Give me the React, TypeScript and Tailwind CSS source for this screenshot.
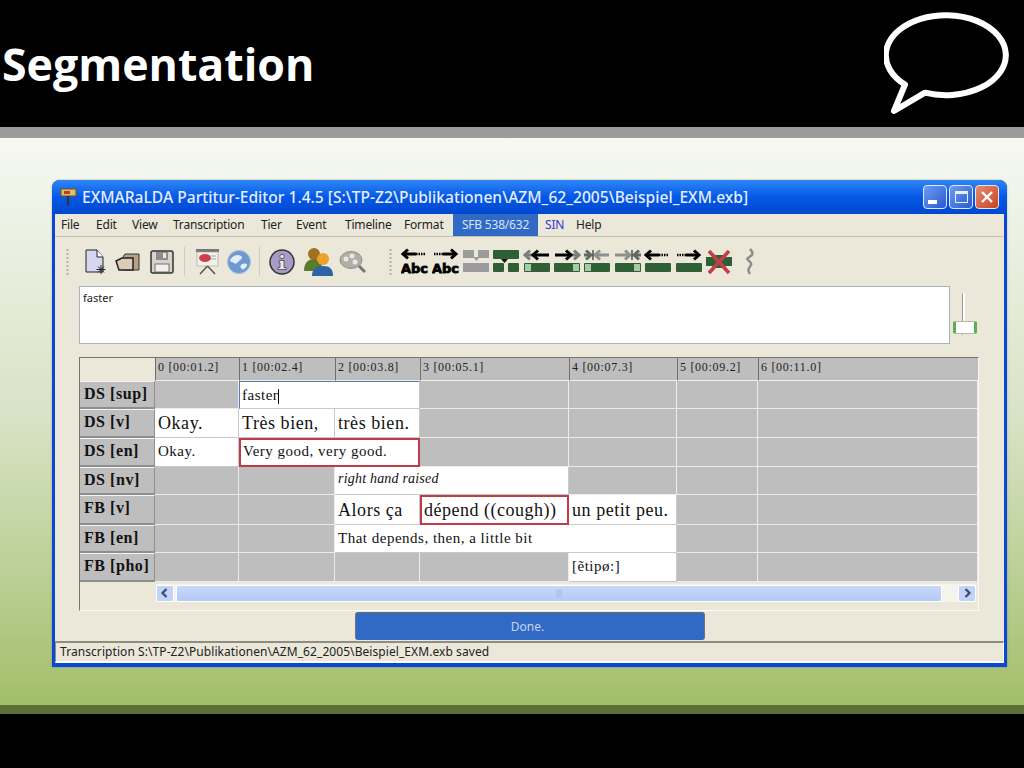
import React from 'react';

const GREEN = '#2f5f35';
const LIGHT = '#a6caa4';
const GRAY = '#9b9b9b';

type Cell = { text?: string; span?: string; red?: boolean; cls?: string; caret?: boolean };

const timeline = ['0 [00:01.2]', '1 [00:02.4]', '2 [00:03.8]', '3 [00:05.1]', '4 [00:07.3]', '5 [00:09.2]', '6 [00:11.0]'];

const big = 'text-[18px] pl-[3px] pt-[4px] tracking-[0.55px]';
const bigLow = 'text-[18px] pl-[3px] pt-[5px] tracking-[0.55px]';
const mid = 'text-[15px] pl-[3px] pt-[3px] tracking-[0.5px]';

const tiers: { label: string; cells: Cell[] }[] = [
  {
    label: 'DS [sup]',
    cells: [{}, { text: 'faster', span: 'col-span-2', cls: 'text-[15px] pl-[2px] pt-[3px] tracking-[0.5px] border-t border-l border-t-[#5a78b0] border-l-[#5a78b0]', caret: true }, {}, {}, {}, {}],
  },
  {
    label: 'DS [v]',
    cells: [
      { text: 'Okay.', cls: big },
      { text: 'Très bien,', cls: big },
      { text: 'très bien.', cls: big },
      {}, {}, {}, {},
    ],
  },
  {
    label: 'DS [en]',
    cells: [
      { text: 'Okay.', cls: mid },
      { text: 'Very good, very good.', span: 'col-span-2', red: true, cls: 'text-[15px] pl-[2px] pt-[1px] tracking-[0.5px]' },
      {}, {}, {}, {},
    ],
  },
  {
    label: 'DS [nv]',
    cells: [
      {}, {},
      { text: 'right hand raised', span: 'col-span-2', cls: 'text-[14px] italic pl-[3px] pt-[2px] tracking-[0.2px]' },
      {}, {}, {},
    ],
  },
  {
    label: 'FB [v]',
    cells: [
      {}, {},
      { text: 'Alors ça', cls: bigLow },
      { text: 'dépend ((cough))', red: true, cls: 'text-[18px] pl-[2px] pt-[3px] tracking-[0.5px]' },
      { text: 'un petit peu.', cls: bigLow },
      {}, {},
    ],
  },
  {
    label: 'FB [en]',
    cells: [
      {}, {},
      { text: 'That depends, then, a little bit', span: 'col-span-3', cls: mid },
      {}, {},
    ],
  },
  {
    label: 'FB [pho]',
    cells: [{}, {}, {}, {}, { text: '[ẽtipø:]', cls: mid }, {}, {}],
  },
];

const menu = [
  { label: 'File', w: 'w-[35px]' },
  { label: 'Edit', w: 'w-[36px]' },
  { label: 'View', w: 'w-[41px]' },
  { label: 'Transcription', w: 'w-[88px]' },
  { label: 'Tier', w: 'w-[35px]' },
  { label: 'Event', w: 'w-[49px]' },
  { label: 'Timeline', w: 'w-[59px]' },
  { label: 'Format', w: 'w-[49px]' },
];

function Gripper({ cls }: { cls: string }) {
  return (
    <svg width="3" height="28" viewBox="0 0 3 28" className={cls}>
      {[1, 5, 9, 13, 17, 21, 25].map(y => (
        <rect key={y} x="0.5" y={y} width="2" height="2" fill="#b5b2a4" />
      ))}
    </svg>
  );
}

function Sep({ cls }: { cls: string }) {
  return <div className={`w-px h-[29px] bg-[#cfccbd] ${cls}`} />;
}

// thick arrow, with the tail broken up into small dashes when dash is set
function Arrow({ x1, x2, y, color = '#000', dash }: { x1: number; x2: number; y: number; color?: string; dash?: boolean }) {
  const dir = x2 > x1 ? 1 : -1;
  const solidEnd = dash ? x2 - dir * 14 : x1;
  return (
    <g stroke={color} fill="none">
      <path d={`M${solidEnd} ${y}H${x2 - dir * 2}`} strokeWidth="3" />
      {dash && <path d={`M${x1} ${y}H${solidEnd}`} strokeWidth="2.500" strokeDasharray="1.500 1" />}
      <path d={`M${x2 - dir * 6} ${y - 4.500}L${x2 - dir} ${y}L${x2 - dir * 6} ${y + 4.500}`} strokeWidth="3" />
    </g>
  );
}

function AbcIcon({ dir, cls }: { dir: 'l' | 'r'; cls: string }) {
  return (
    <svg width="28" height="27" viewBox="0 0 28 27" className={cls}>
      {dir === 'l' ? <Arrow x1={24} x2={1} y={6} dash /> : <Arrow x1={2} x2={25} y={6} dash />}
      <text x="0" y="25" fontFamily="'DejaVu Sans', sans-serif" fontWeight="900" fontSize="13" stroke="#000" strokeWidth="0.800" fill="#000" textLength="27" lengthAdjust="spacingAndGlyphs">Abc</text>
    </svg>
  );
}

function MergeIcon({ cls }: { cls: string }) {
  return (
    <svg width="28" height="27" viewBox="0 0 28 27" className={cls}>
      <path d="M1 2h11v8H1zM16 2h11v8H16z" fill={GRAY} />
      <path d="M11 9h7l-3.500 4z" fill={GRAY} />
      <rect x="1" y="15" width="26" height="9" fill={GRAY} />
    </svg>
  );
}

function SplitIcon({ cls }: { cls: string }) {
  return (
    <svg width="28" height="27" viewBox="0 0 28 27" className={cls}>
      <rect x="1" y="2" width="26" height="9" rx="1" fill={GREEN} />
      <path d="M9 11h7l-3.500 4z" fill="#111" />
      <rect x="1" y="15" width="11" height="9" rx="1" fill={GREEN} />
      <rect x="16" y="15" width="11" height="9" rx="1" fill={GREEN} />
    </svg>
  );
}

function Bar({ tab }: { tab?: 'l' | 'r' }) {
  return (
    <>
      <rect x="1" y="15" width="26" height="9" rx="1" fill={GREEN} />
      {tab === 'l' && <rect x="2" y="16" width="6" height="7" fill={LIGHT} />}
      {tab === 'r' && <rect x="20" y="16" width="6" height="7" fill={LIGHT} />}
    </>
  );
}

function ShiftIcon({ dir, tab, cls }: { dir: 'l' | 'r'; tab: 'l' | 'r'; cls: string }) {
  return (
    <svg width="28" height="27" viewBox="0 0 28 27" className={cls}>
      {dir === 'l' ? (
        <>
          <Arrow x1={14} x2={1} y={7} color="#7d7d7d" />
          <Arrow x1={26} x2={9} y={7} />
        </>
      ) : (
        <>
          <Arrow x1={14} x2={27} y={7} color="#7d7d7d" />
          <Arrow x1={2} x2={19} y={7} />
        </>
      )}
      <Bar tab={tab} />
    </svg>
  );
}

function SqueezeIcon({ dir, tab, cls }: { dir: 'l' | 'r'; tab: 'l' | 'r'; cls: string }) {
  return (
    <svg width="28" height="27" viewBox="0 0 28 27" className={cls}>
      {dir === 'l' ? (
        <>
          <Arrow x1={1} x2={9} y={7} color="#5f6a60" />
          <Arrow x1={26} x2={11} y={7} color="#8d918d" />
          <path d="M10 2v10" stroke="#4c544d" strokeWidth="1.500" />
        </>
      ) : (
        <>
          <Arrow x1={1} x2={17} y={7} color="#8d918d" />
          <Arrow x1={27} x2={19} y={7} color="#5f6a60" />
          <path d="M18 2v10" stroke="#4c544d" strokeWidth="1.500" />
        </>
      )}
      <Bar tab={tab} />
    </svg>
  );
}

function MoveIcon({ dir, cls }: { dir: 'l' | 'r'; cls: string }) {
  return (
    <svg width="28" height="27" viewBox="0 0 28 27" className={cls}>
      {dir === 'l' ? <Arrow x1={24} x2={1} y={7} dash /> : <Arrow x1={2} x2={25} y={7} dash />}
      <Bar />
    </svg>
  );
}

function DeleteIcon({ cls }: { cls: string }) {
  return (
    <svg width="28" height="27" viewBox="0 0 28 27" className={cls}>
      <path d="M1 9h6l2-2h10l2 2h6v9h-6l-2 2H9l-2-2H1z" fill={GREEN} />
      <path d="M4 3L24 25M24 3L4 25" stroke="#c23f48" strokeWidth="3.600" />
    </svg>
  );
}

function TitleButton({ children, red }: { children: React.ReactNode; red?: boolean }) {
  return (
    <div
      className={`w-[24px] h-[24px] rounded-[4px] border border-[#dfe8fb] flex items-center justify-center ${
        red ? 'bg-gradient-to-br from-[#e88a6c] to-[#c9401f]' : 'bg-gradient-to-br from-[#6f9bf0] to-[#2a58d2]'
      }`}
    >
      {children}
    </div>
  );
}

export default function App() {
  return (
    <div className="w-[1024px] h-[768px] flex flex-col overflow-hidden bg-black font-['Liberation_Sans',sans-serif]">
      <header className="h-[127px] shrink-0 bg-black flex justify-between">
        <h1 className="pl-[2px] pt-[34px] text-[44.700px] leading-[60px] font-bold text-white font-['Open_Sans',sans-serif]">Segmentation</h1>
        <svg width="140" height="127" viewBox="884 0 140 127">
          <path
            d="M905 84.500L894 111L925 92.700A60 40 0 1 0 905 84.500Z"
            fill="none"
            stroke="#fff"
            strokeWidth="6"
            strokeLinejoin="round"
          />
        </svg>
      </header>
      <div className="h-[11px] shrink-0 bg-[#9b9b9b]" />

      <main className="h-[567px] shrink-0 bg-gradient-to-b from-[#f6f8f2] via-[#d8e2c5] to-[#a2bf6a] pt-[42px] pl-[52px]">
        {/* Window */}
        <div className="w-[955px] h-[487px] flex flex-col rounded-t-[8px] bg-[#0a47d4] px-[3px] pb-[4px] shadow-[0_0_2px_rgba(0,0,0,0.3)]">
          <div className="h-[34px] -mx-[3px] px-[6px] rounded-t-[8px] shrink-0 flex items-center bg-gradient-to-b from-[#2e86f5] via-[#0558e6] to-[#0148cf]">
            <svg width="20" height="20" viewBox="0 0 20 20">
              <rect x="3" y="2" width="15" height="7" fill="#d9c35a" stroke="#7a4a2a" />
              <rect x="6" y="4" width="6" height="3" fill="#c0392b" />
              <rect x="9" y="9" width="2" height="9" fill="#333" />
            </svg>
            <span className="ml-[4px] pt-[1px] text-[15.600px] font-medium text-[#e6eeff] whitespace-nowrap font-['Noto_Sans',sans-serif]">
              EXMARaLDA Partitur-Editor 1.4.5 [S:\TP-Z2\Publikationen\AZM_62_2005\Beispiel_EXM.exb]
            </span>
            <div className="ml-auto flex gap-[2px] pr-[2px]">
              <TitleButton>
                <div className="w-[9px] h-[4px] mt-[9px] mr-[6px] bg-white" />
              </TitleButton>
              <TitleButton>
                <div className="w-[13px] h-[12px] border border-t-[3px] border-[#e8efff]" />
              </TitleButton>
              <TitleButton red>
                <svg width="14" height="14" viewBox="0 0 14 14">
                  <path d="M2 2L12 12M12 2L2 12" stroke="#fff" strokeWidth="2.400" />
                </svg>
              </TitleButton>
            </div>
          </div>

          <div className="flex-1 min-h-0 flex flex-col bg-[#ebe8da]">
            {/* Menu */}
            <nav className="h-[23px] shrink-0 flex items-center pl-[6px] border-b border-[#c4c1b1] text-[12px] tracking-[-0.2px] text-[#222] font-['Noto_Sans',sans-serif]">
              {menu.map(m => (
                <span key={m.label} className={m.w}>{m.label}</span>
              ))}
              <span className="w-[85px] h-full flex items-center justify-center bg-[#316ac5] text-[#d9e4f7]">SFB 538/632</span>
              <span className="ml-[7px] w-[31px] text-[#3a35d8]">SIN</span>
              <span>Help</span>
            </nav>

            {/* Toolbar */}
            <div className="h-[49px] shrink-0 flex items-center">
              <Gripper cls="ml-[11px]" />
              <svg width="23" height="26" viewBox="0 0 23 26" className="ml-[16px]">
                <path d="M1 1h11l6 7v15H1z" fill="#d5d7ee" stroke="#222" />
                <path d="M12 1v7h6" fill="#fff" stroke="#222" />
                <path d="M16 16v9M11.500 20.500h9M13 17.500l6 6M19 17.500l-6 6" stroke="#222" />
              </svg>
              <svg width="25" height="20" viewBox="0 0 25 20" className="ml-[7px]">
                <path d="M8 5l2-3h14v16H8z" fill="#b7a185" stroke="#333" />
                <path d="M1 9l6-3h11v12H4z" fill="#d9cdb8" stroke="#222" strokeWidth="1.500" />
              </svg>
              <svg width="24" height="24" viewBox="0 0 24 24" className="ml-[10px]">
                <rect x="1" y="1" width="22" height="22" rx="2" fill="#d6d3cb" stroke="#333" strokeWidth="1.500" />
                <rect x="6" y="2" width="12" height="8" fill="#8d8d8d" />
                <rect x="13" y="3" width="3" height="5" fill="#e8e8e8" />
                <rect x="5" y="14" width="14" height="8" fill="#f2f0ea" stroke="#555" strokeWidth="0.800" />
              </svg>
              <Sep cls="ml-[10px]" />
              <svg width="25" height="27" viewBox="0 0 25 27" className="ml-[10px]">
                <rect x="1" y="1" width="23" height="3" fill="#777" />
                <rect x="2" y="4" width="21" height="14" fill="#f5f1e6" stroke="#999" strokeWidth="0.600" />
                <ellipse cx="10" cy="10" rx="6" ry="4" fill="#c8414a" />
                <path d="M16 8h5M16 11h5" stroke="#9ab" />
                <path d="M12.500 18L5 26M12.500 18L20 26" stroke="#555" strokeWidth="1.500" />
              </svg>
              <svg width="24" height="24" viewBox="0 0 24 24" className="ml-[7px]">
                <circle cx="12" cy="12" r="11.500" fill="#6f9ad0" stroke="#a7bfda" />
                <path d="M3 10c3-5 8-6 11-4s-1 4-3 6-3 2-4 1-3 0-4-3zM14 15c2-2 6-2 6 0s-3 5-5 4-2-3-1-4z" fill="#e4edf8" />
              </svg>
              <Sep cls="ml-[8px]" />
              <svg width="26" height="26" viewBox="0 0 26 26" className="ml-[9px]">
                <circle cx="13" cy="13" r="12" fill="#a99cc4" stroke="#333" strokeWidth="1.500" />
                <circle cx="13" cy="7.500" r="2.200" fill="#ece8f2" stroke="#444" strokeWidth="0.800" />
                <path d="M10 11.500h5v7h2v2H9v-2h2v-5h-1z" fill="#ece8f2" stroke="#444" strokeWidth="0.800" />
              </svg>
              <svg width="30" height="29" viewBox="0 0 30 29" className="ml-[8px]">
                <circle cx="11" cy="7" r="6" fill="#a3701f" />
                <path d="M1 24c0-8 4-12 10-12s8 4 8 10v2z" fill="#5e7a2c" />
                <circle cx="20" cy="12" r="6" fill="#eca12e" />
                <path d="M9 29c0-7 4-10 11-10s10 3 10 10z" fill="#2f63a8" />
              </svg>
              <svg width="27" height="24" viewBox="0 0 27 24" className="ml-[6px]">
                <ellipse cx="12" cy="10" rx="11" ry="8.500" fill="#b0b0a8" stroke="#8f8f87" />
                <circle cx="7" cy="9" r="2.500" fill="#e9e9e2" />
                <circle cx="13" cy="6" r="2.500" fill="#e9e9e2" />
                <circle cx="16" cy="12" r="2.500" fill="#e9e9e2" />
                <path d="M20 16l6 6" stroke="#777" strokeWidth="3" />
              </svg>
              <Gripper cls="ml-[23px]" />
              <AbcIcon dir="l" cls="ml-[9px]" />
              <AbcIcon dir="r" cls="ml-[3px]" />
              <MergeIcon cls="ml-[2px]" />
              <SplitIcon cls="ml-[2px]" />
              <ShiftIcon dir="l" tab="l" cls="ml-[3px]" />
              <ShiftIcon dir="r" tab="r" cls="ml-[2px]" />
              <SqueezeIcon dir="l" tab="l" cls="ml-[2px]" />
              <SqueezeIcon dir="r" tab="r" cls="ml-[3px]" />
              <MoveIcon dir="l" cls="ml-[2px]" />
              <MoveIcon dir="r" cls="ml-[3px]" />
              <DeleteIcon cls="ml-[2px]" />
              <svg width="11" height="27" viewBox="0 0 11 27" className="ml-[11px]">
                <path d="M6 1C10 5 9 7 4 10C1 12 9 14 7 17C5 20 3 22 6 26" fill="none" stroke="#8d8d8d" strokeWidth="2.500" />
              </svg>
            </div>

            {/* Editor */}
            <div className="h-[58px] shrink-0 flex">
              <div className="ml-[24px] w-[871px] h-[58px] bg-white border border-[#a8b2bb] pl-[3px] pt-[4px] text-[11px] leading-[14px] text-[#222] font-['Noto_Sans',sans-serif]">
                faster
              </div>
              <div className="relative ml-[3px] w-[24px] h-[58px]">
                <div className="absolute left-[9px] top-[7px] w-[3px] h-[42px] rounded-t-[2px] border-l border-[#9a988c] bg-white" />
                <div className="absolute left-0 top-[35px] w-[24px] h-[13px] rounded-[2px] bg-white border-x-[3px] border-x-[#58b158] border-y border-y-[#b9b7aa]" />
              </div>
            </div>

            {/* Partitur */}
            <div className="ml-[24px] mt-[13px] w-[900px] h-[254px] shrink-0 flex flex-col border-t border-l border-[#77756a] border-r border-b border-r-[#fbfaf5] border-b-[#fbfaf5] font-['Liberation_Serif',serif] text-[#111]">
              <div className="grid grid-cols-[75px_84px_96px_85px_149px_108px_81px_220px] grid-rows-[23px_28px_29px_29px_28px_30px_28px_29px]">
                <div />
                {timeline.map(t => (
                  <div key={t} className="bg-[#bebebe] border-l border-[#6f6f6f] border-b border-b-[#efefef] pl-[2px] pt-[1px] text-[12px] leading-[16px] tracking-[0.7px] text-[#222] whitespace-nowrap overflow-hidden">
                    {t}
                  </div>
                ))}
                {tiers.map(tier => (
                  <React.Fragment key={tier.label}>
                    <div className="bg-[#bebebe] border-b-2 border-r border-b-[#8f8f8f] border-r-[#8f8f8f] border-t border-t-[#f4f4f4] pl-[4px] pt-[2px] text-[16px] leading-[20px] font-bold tracking-[0.55px] whitespace-nowrap">
                      {tier.label}
                    </div>
                    {tier.cells.map((c, i) =>
                      c.text ? (
                        <div
                          key={i}
                          className={`bg-white leading-[20px] whitespace-nowrap overflow-hidden ${c.span ?? ''} ${c.cls ?? ''} ${
                            c.red ? 'border-2 border-[#c13a47]' : 'border-r border-b border-r-[#c9c9c9] border-b-[#c9c9c9]'
                          }`}
                        >
                          {c.text}
                          {c.caret && <span className="inline-block w-px h-[15px] bg-black align-middle" />}
                        </div>
                      ) : (
                        <div key={i} className="bg-[#bebebe] border-r border-b border-[#ececec]" />
                      ),
                    )}
                  </React.Fragment>
                ))}
              </div>

              {/* Scrollbar */}
              <div className="mt-[2px] ml-[76px] mr-[2px] h-[18px] flex items-center gap-[2px] bg-[#f5f4ec]">
                <div className="w-[18px] h-[17px] rounded-[2px] bg-[#c3d3f8] border border-white flex items-center justify-center">
                  <svg width="9" height="10" viewBox="0 0 9 10"><path d="M6.500 1L2.500 5L6.500 9" fill="none" stroke="#3b4a73" strokeWidth="2.200" /></svg>
                </div>
                <div className="w-[767px] h-[17px] rounded-[2px] bg-gradient-to-b from-[#c9d8fc] to-[#b5c9f4] border border-white flex items-center justify-center text-[8px] leading-none text-[#8ea4d4]">
                  ||||
                </div>
                <div className="w-[12px]" />
                <div className="w-[18px] h-[17px] rounded-[2px] bg-[#c3d3f8] border border-white flex items-center justify-center">
                  <svg width="9" height="10" viewBox="0 0 9 10"><path d="M2.500 1L6.500 5L2.500 9" fill="none" stroke="#3b4a73" strokeWidth="2.200" /></svg>
                </div>
              </div>
            </div>

            {/* Done */}
            <div className="h-[30px] shrink-0 flex justify-center pt-[1px]">
              <button className="w-[350px] h-[28px] pr-[4px] rounded-[3px] bg-[#316ac5] border-x border-x-[#6f7480] border-t border-t-[#6a6a66] text-[12px] text-[#c6d5ee] font-['Noto_Sans',sans-serif]">
                Done.
              </button>
            </div>

            {/* Status */}
            <div className="flex-1 border-t-2 border-[#8f8d82] border-l border-r border-r-white border-l-[#8f8d82] border-b-2 border-b-white pl-[4px] pt-[1px] text-[12px] leading-[16px] tracking-[0.07px] text-[#222] font-['Noto_Sans',sans-serif]">
              Transcription S:\TP-Z2\Publikationen\AZM_62_2005\Beispiel_EXM.exb saved
            </div>
          </div>
        </div>
      </main>

      <div className="h-[9px] shrink-0 bg-[#5f7036]" />
      <div className="flex-1 bg-black" />
    </div>
  );
}
